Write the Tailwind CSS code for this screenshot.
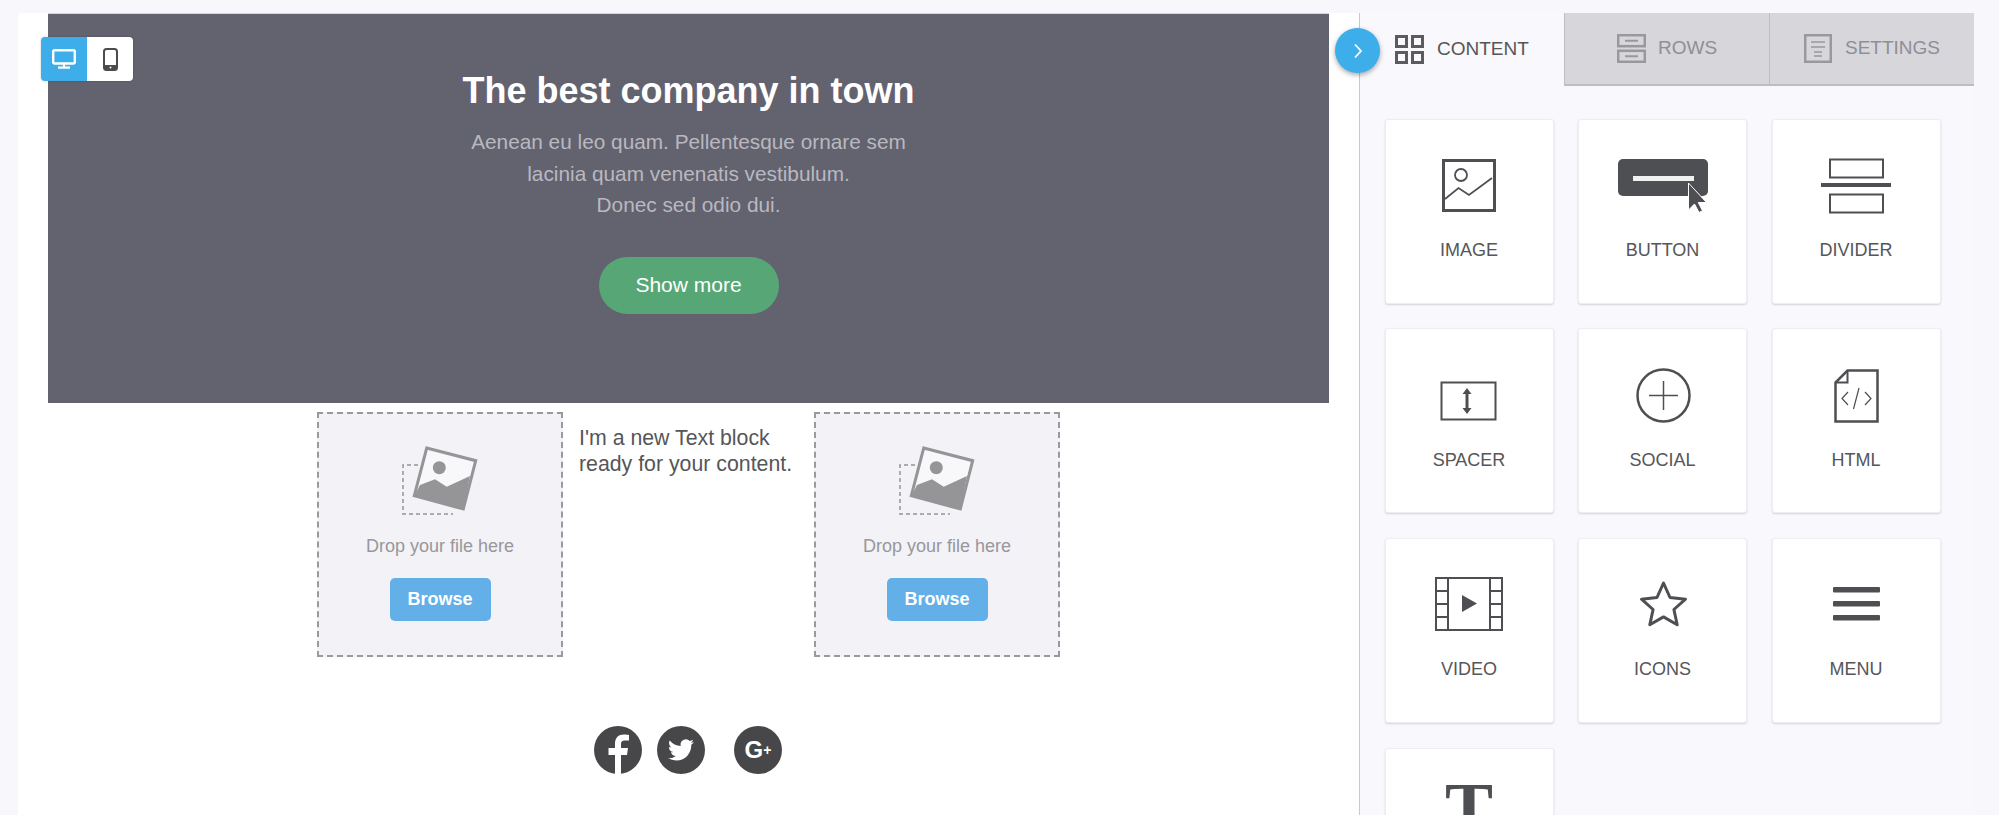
<!DOCTYPE html>
<html lang="en">
<head>
  <meta charset="UTF-8">
  <meta name="viewport" content="width=device-width, initial-scale=1.0">
  <title>Email builder</title>
  <script src="https://cdn.jsdelivr.net/npm/@tailwindcss/browser@4"></script>
</head>
<body class="bg-[#f8f7fb] h-screen overflow-hidden font-['Liberation_Sans',Arial,sans-serif] text-[#555659]">
  <div class="flex pt-[13px] pl-[18px] h-[1000px]">

    <!-- canvas -->
    <div class="relative w-[1341px] bg-white pl-[30px] rounded-tl-sm">
      <div class="absolute left-[23px] top-[24px] w-[92px] h-[44px] flex bg-white rounded-[4px] overflow-hidden shadow-[0_0_2px_rgba(0,0,0,0.25)]">
        <div class="w-[46px] bg-[#3eaeeb] flex items-center justify-center">
          <svg width="24" height="20" viewBox="0 0 24 20" fill="none">
            <rect x="1.2" y="1.2" width="21.6" height="13.3" rx="1.5" stroke="#fff" stroke-width="2.4"/>
            <path d="M12 15v3M6 18.700h12" stroke="#fff" stroke-width="2.2"/>
          </svg>
        </div>
        <div class="flex-1 flex items-center justify-center">
          <svg width="15" height="23" viewBox="0 0 15 23" fill="none">
            <rect x="1" y="1" width="13" height="21" rx="2.5" fill="#fff" stroke="#4c4c50" stroke-width="2"/>
            <rect x="1" y="17" width="13" height="5" rx="1.5" fill="#4c4c50"/>
            <circle cx="7.5" cy="19.5" r="1" fill="#fff"/>
          </svg>
        </div>
      </div>

      <div class="w-[1281px] h-[390px] bg-[#63626f] border-t border-[#d5d4da] flex flex-col items-center pt-[55px]">
        <h1 class="text-[36px] leading-[44px] font-bold text-white">The best company in town</h1>
        <p class="mt-[13px] text-[20.8px] leading-[31.5px] text-[#b9b8c0] text-center">Aenean eu leo quam. Pellentesque ornare sem<br>lacinia quam venenatis vestibulum.<br>Donec sed odio dui.</p>
        <button class="mt-[36px] w-[180px] h-[57px] rounded-full bg-[#56a775] text-white text-[21px]">Show more</button>
      </div>

      <div class="flex pl-[269px] mt-[9px]">
        <div class="w-[246px] h-[245px] border-2 border-dashed border-[#9a9a9e] bg-[#f3f2f6] flex flex-col items-center pt-[31px]">
          <svg width="80" height="72" viewBox="0 0 80 72" fill="none">
            <path d="M18 20H3v49h50" stroke="#959598" stroke-width="1.5" stroke-dasharray="4 3"/>
            <path d="M26.7 3L75.7 15.7 63.3 64 14.3 50.7z" fill="#f8f8fa" stroke="#959598" stroke-width="3"/>
            <circle cx="39.3" cy="22.7" r="6.5" fill="#959598"/>
            <path d="M20 40l15-5.700 11.700 7.400L70 31l-6.700 33-49-13.300z" fill="#959598"/>
          </svg>
          <p class="mt-[17px] text-[18px] leading-[24px] text-[#98979c]">Drop your file here</p>
          <button class="mt-[20px] w-[101px] h-[43px] rounded-[5px] bg-[#63b0e9] text-white text-[18px] font-bold">Browse</button>
        </div>
        <p class="w-[251px] pl-[16px] pt-[13px] text-[21.3px] leading-[26px]">I'm a new Text block ready for your content.</p>
        <div class="w-[246px] h-[245px] border-2 border-dashed border-[#9a9a9e] bg-[#f3f2f6] flex flex-col items-center pt-[31px]">
          <svg width="80" height="72" viewBox="0 0 80 72" fill="none">
            <path d="M18 20H3v49h50" stroke="#959598" stroke-width="1.5" stroke-dasharray="4 3"/>
            <path d="M26.7 3L75.7 15.7 63.3 64 14.3 50.7z" fill="#f8f8fa" stroke="#959598" stroke-width="3"/>
            <circle cx="39.3" cy="22.7" r="6.5" fill="#959598"/>
            <path d="M20 40l15-5.700 11.700 7.400L70 31l-6.700 33-49-13.300z" fill="#959598"/>
          </svg>
          <p class="mt-[17px] text-[18px] leading-[24px] text-[#98979c]">Drop your file here</p>
          <button class="mt-[20px] w-[101px] h-[43px] rounded-[5px] bg-[#63b0e9] text-white text-[18px] font-bold">Browse</button>
        </div>
      </div>

      <div class="flex pl-[546px] mt-[69px]">
        <svg width="48" height="48" viewBox="0 0 48 48">
          <circle cx="24" cy="24" r="24" fill="#474649"/>
          <path d="M27 48V29h6l1-7h-7v-4c0-2 1-3.500 3.500-3.500H35V9c-1-.2-3-.4-5-.4-5.500 0-9 3.300-9 9V22h-6.500v7H21v19z" fill="#fff"/>
        </svg>
        <svg class="ml-[15px]" width="48" height="48" viewBox="0 0 48 48">
          <circle cx="24" cy="24" r="24" fill="#474649"/>
          <path transform="translate(11 11) scale(1.08)" d="M23.953 4.57a10 10 0 01-2.825.775 4.958 4.958 0 002.163-2.723c-.951.555-2.005.959-3.127 1.184a4.92 4.92 0 00-8.384 4.482C7.69 8.095 4.067 6.13 1.64 3.162a4.822 4.822 0 00-.666 2.475c0 1.71.87 3.213 2.188 4.096a4.904 4.904 0 01-2.228-.616v.06a4.923 4.923 0 003.946 4.827 4.996 4.996 0 01-2.212.085 4.936 4.936 0 004.604 3.417 9.867 9.867 0 01-6.102 2.105c-.39 0-.779-.023-1.17-.067a13.995 13.995 0 007.557 2.209c9.053 0 13.998-7.496 13.998-13.985 0-.21 0-.42-.015-.63A9.935 9.935 0 0024 4.590z" fill="#fff"/>
        </svg>
        <div class="ml-[29px] w-[48px] h-[48px] rounded-full bg-[#474649] text-white font-bold flex items-center justify-center">
          <span class="text-[24px] leading-none">G</span><span class="text-[14px] leading-none">+</span>
        </div>
      </div>
    </div>

    <!-- side panel -->
    <div class="relative w-[615px] border-l border-[#c9c8ce] bg-[#f9f8fc]">
      <div class="absolute left-[-25px] top-[15px] w-[45px] h-[45px] rounded-full bg-[#3eaeeb] shadow-[0_2px_5px_rgba(0,0,0,0.35)] flex items-center justify-center">
        <svg width="12" height="18" viewBox="0 0 12 18" fill="none"><path d="M3 2.500L9 9l-6 6.500" stroke="#fff" stroke-width="1.800"/></svg>
      </div>

      <div class="flex h-[73px] text-[19px]">
        <div class="w-[204px] flex items-center gap-[13px] pl-[35px]">
          <svg width="29" height="29" viewBox="0 0 29 29" fill="none" stroke="#5b5c60" stroke-width="3">
            <rect x="1.500" y="1.500" width="10" height="10"/><rect x="17.500" y="1.500" width="10" height="10"/>
            <rect x="1.500" y="17.500" width="10" height="10"/><rect x="17.500" y="17.500" width="10" height="10"/>
          </svg>
          <span>CONTENT</span>
        </div>
        <div class="w-[205px] flex items-center gap-[12px] pl-[52px] bg-[#d6d6db] border-b-2 border-l border-[#bdbdc2] text-[#8f8f94]">
          <svg width="29" height="29" viewBox="0 0 29 29" fill="none" stroke="#98989d" stroke-width="2.500">
            <rect x="1.200" y="1.200" width="26.600" height="11"/><rect x="1.200" y="16.800" width="26.600" height="11"/>
            <path d="M8 6.700h13M8 22.300h13" stroke-width="2"/>
          </svg>
          <span>ROWS</span>
        </div>
        <div class="w-[205px] flex items-center gap-[13px] pl-[34px] bg-[#d6d6db] border-b-2 border-l border-[#bdbdc2] text-[#8f8f94]">
          <svg width="28" height="29" viewBox="0 0 28 29" fill="none" stroke="#98989d" stroke-width="2">
            <rect x="1.200" y="1.200" width="25.600" height="26.600" stroke-width="2.500"/>
            <path d="M7 8h14M7 13h14M10 18h8M10 22h8" stroke-width="1.500"/>
          </svg>
          <span>SETTINGS</span>
        </div>
      </div>

      <div class="grid grid-cols-[169px_169px_169px] gap-x-[24.5px] gap-y-[24.7px] pl-[24.5px] pt-[32.5px] text-[18px]">

        <div class="h-[185px] bg-white rounded-[3px] border border-[#eeedf1] shadow-[0_1px_2px_rgba(0,0,0,0.15)] flex flex-col items-center pt-[35.5px]">
          <svg width="100" height="64" viewBox="0 0 100 64" fill="none" stroke="#4e4f52">
            <rect x="24.500" y="5.500" width="51" height="50" stroke-width="3"/>
            <circle cx="42" cy="20" r="6" stroke-width="1.800"/>
            <path d="M26 44l13.500-11 10.500 7 23-17" stroke-width="1.800"/>
          </svg>
          <span class="mt-[19px] leading-[24px]">IMAGE</span>
        </div>

        <div class="h-[185px] bg-white rounded-[3px] border border-[#eeedf1] shadow-[0_1px_2px_rgba(0,0,0,0.15)] flex flex-col items-center pt-[35.5px]">
          <svg width="100" height="64" viewBox="0 0 100 64">
            <rect x="5" y="4" width="90" height="37" rx="5" fill="#4e4f52"/>
            <rect x="20" y="21" width="61" height="5" fill="#f1f1f1"/>
            <path d="M75.500 28v27l6-6 4.500 8.500 3.500-1.800-4.200-8.200h8.200z" fill="#4e4f52" stroke="#fff" stroke-width="1"/>
          </svg>
          <span class="mt-[19px] leading-[24px]">BUTTON</span>
        </div>

        <div class="h-[185px] bg-white rounded-[3px] border border-[#eeedf1] shadow-[0_1px_2px_rgba(0,0,0,0.15)] flex flex-col items-center pt-[35.5px]">
          <svg width="100" height="64" viewBox="0 0 100 64" fill="none" stroke="#4e4f52">
            <rect x="24" y="4.500" width="53" height="18" stroke-width="2"/>
            <path d="M15 30h70" stroke-width="4"/>
            <rect x="24" y="39.500" width="53" height="18" stroke-width="2"/>
          </svg>
          <span class="mt-[19px] leading-[24px]">DIVIDER</span>
        </div>

        <div class="h-[185px] bg-white rounded-[3px] border border-[#eeedf1] shadow-[0_1px_2px_rgba(0,0,0,0.15)] flex flex-col items-center pt-[35.5px]">
          <svg width="100" height="64" viewBox="0 0 100 64" fill="none" stroke="#4e4f52">
            <rect x="22.500" y="17.500" width="54" height="37" stroke-width="2"/>
            <path d="M48 28v16" stroke-width="3"/>
            <path d="M48 23l-4.500 6h9zM48 49l-4.500-6h9z" fill="#4e4f52" stroke="none"/>
          </svg>
          <span class="mt-[19px] leading-[24px]">SPACER</span>
        </div>

        <div class="h-[185px] bg-white rounded-[3px] border border-[#eeedf1] shadow-[0_1px_2px_rgba(0,0,0,0.15)] flex flex-col items-center pt-[35.5px]">
          <svg width="100" height="64" viewBox="0 0 100 64" fill="none" stroke="#4e4f52">
            <circle cx="50.500" cy="30.500" r="26" stroke-width="2.500"/>
            <path d="M36 30.500h29M50.500 16v29" stroke-width="1.500"/>
          </svg>
          <span class="mt-[19px] leading-[24px]">SOCIAL</span>
        </div>

        <div class="h-[185px] bg-white rounded-[3px] border border-[#eeedf1] shadow-[0_1px_2px_rgba(0,0,0,0.15)] flex flex-col items-center pt-[35.5px]">
          <svg width="100" height="64" viewBox="0 0 100 64" fill="none" stroke="#4e4f52">
            <path d="M41.500 5.500h30v51h-42V17.500z" stroke-width="2.500"/>
            <path d="M41.500 5.500v12h-12" stroke-width="2"/>
            <path d="M42 27l-6 6.500 6 6.500M59 27l6 6.500-6 6.500M53 23l-5.500 21" stroke-width="1.200"/>
          </svg>
          <span class="mt-[19px] leading-[24px]">HTML</span>
        </div>

        <div class="h-[185px] bg-white rounded-[3px] border border-[#eeedf1] shadow-[0_1px_2px_rgba(0,0,0,0.15)] flex flex-col items-center pt-[35.5px]">
          <svg width="100" height="64" viewBox="0 0 100 64" fill="none" stroke="#4e4f52" stroke-width="2">
            <rect x="17" y="4" width="66" height="52"/>
            <path d="M29 4v52M71 4v52M17 17h12M17 30h12M17 43h12M71 17h12M71 30h12M71 43h12"/>
            <path d="M43 21l15 8.500-15 8.500z" fill="#4e4f52" stroke="none"/>
          </svg>
          <span class="mt-[19px] leading-[24px]">VIDEO</span>
        </div>

        <div class="h-[185px] bg-white rounded-[3px] border border-[#eeedf1] shadow-[0_1px_2px_rgba(0,0,0,0.15)] flex flex-col items-center pt-[35.5px]">
          <svg width="100" height="64" viewBox="0 0 100 64" fill="none" stroke="#4e4f52" stroke-width="3" stroke-linejoin="round">
            <path d="M50.500 9l6.500 14.500 15.500 1.700-11.600 10.300 3.300 15.300-13.700-7.900-13.700 7.900 3.300-15.300-11.600-10.300 15.500-1.700z"/>
          </svg>
          <span class="mt-[19px] leading-[24px]">ICONS</span>
        </div>

        <div class="h-[185px] bg-white rounded-[3px] border border-[#eeedf1] shadow-[0_1px_2px_rgba(0,0,0,0.15)] flex flex-col items-center pt-[35.5px]">
          <svg width="100" height="64" viewBox="0 0 100 64" fill="#4e4f52">
            <rect x="27" y="13" width="47" height="5.500" rx="1"/>
            <rect x="27" y="27" width="47" height="5.500" rx="1"/>
            <rect x="27" y="41" width="47" height="5.500" rx="1"/>
          </svg>
          <span class="mt-[19px] leading-[24px]">MENU</span>
        </div>

        <div class="h-[185px] bg-white rounded-[3px] border border-[#eeedf1] shadow-[0_1px_2px_rgba(0,0,0,0.15)] flex flex-col items-center pt-[23px]">
          <span class="font-['Liberation_Serif',serif] font-bold text-[72px] leading-[72px] text-[#4e4f52]">T</span>
        </div>

      </div>
    </div>
  </div>
</body>
</html>
